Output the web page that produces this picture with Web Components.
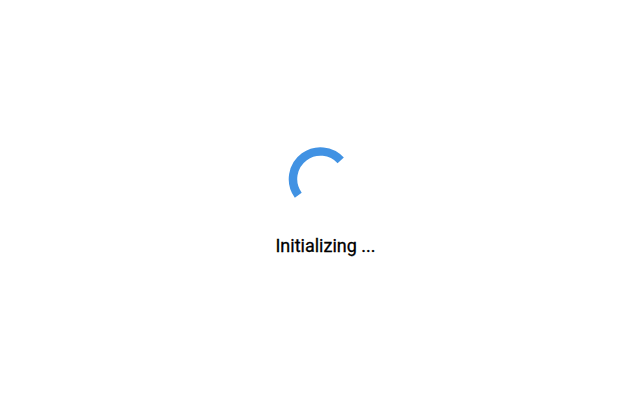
<!DOCTYPE html>
<html>
<head>
<meta charset="utf-8">
<title>Initializing</title>
<style>
html, body { margin: 0; height: 100%; background: #fff; }
</style>
</head>
<body>
<app-loader>Initializing ...</app-loader>
<script>
class LoadSpinner extends HTMLElement {
	constructor(){
		super();
		let shadowRoot = this.attachShadow({mode: 'open'});
		shadowRoot.innerHTML = `
			<style>
			:host { display: block; width: 64px; height: 64px; }
			svg { display: block; }
			</style>
			<svg width="64" height="64" viewBox="0 0 64 64">
				<circle cx="32.5" cy="32" r="27.5" fill="none" stroke="#4192e3" stroke-width="8.5"
					stroke-dasharray="83 173" transform="rotate(144 32.5 32)"/>
			</svg>
		`;
	}
}
class AppLoader extends HTMLElement {
	constructor(){
		super();
		let shadowRoot = this.attachShadow({mode: 'open'});
		shadowRoot.innerHTML = `
			<style>
			:host {
				display: flex;
				flex-direction: column;
				align-items: center;
				height: 100%;
				box-sizing: border-box;
				padding-top: 147px;
				font: 18px Roboto, sans-serif;
				color: #000;
				-webkit-text-stroke: 0.3px #000;
			}
			.label { margin-top: 24px; padding-left: 11px; line-height: 21px; white-space: nowrap; }
			</style>
			<load-spinner></load-spinner>
			<div class="label"><slot></slot></div>
		`;
	}
}
customElements.define('load-spinner', LoadSpinner);
customElements.define('app-loader', AppLoader);
</script>
</body>
</html>
